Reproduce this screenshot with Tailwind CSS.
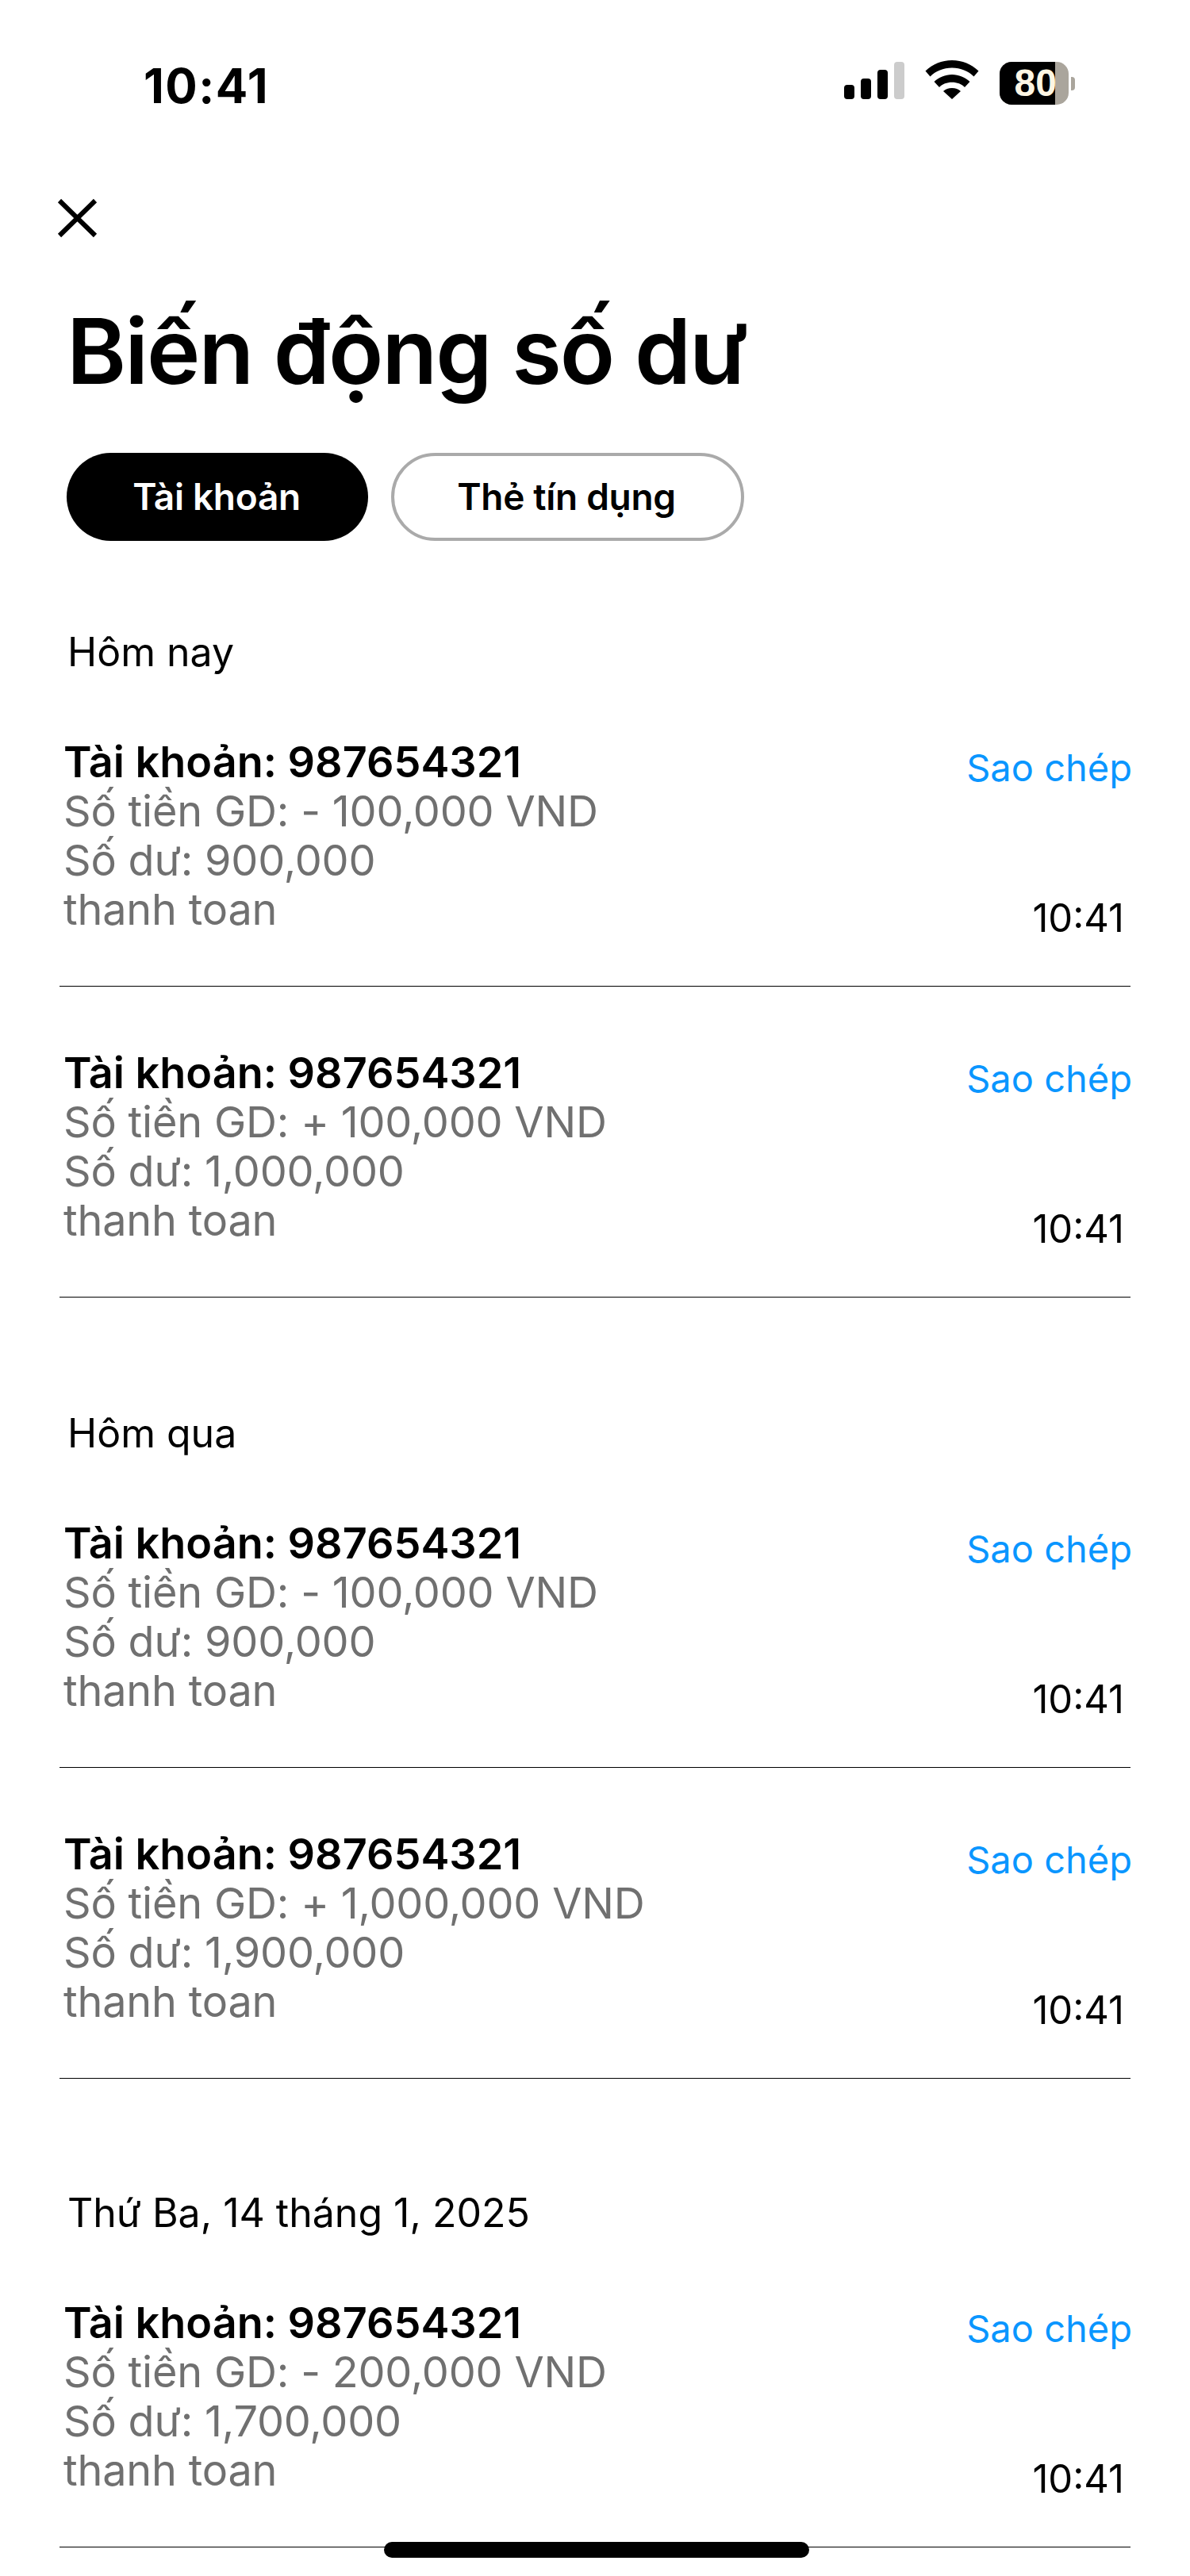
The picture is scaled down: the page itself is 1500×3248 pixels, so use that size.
<!DOCTYPE html>
<html lang="vi">
<head>
<meta charset="utf-8">
<script src="https://cdn.jsdelivr.net/npm/@tailwindcss/browser@4"></script>
<title>Biến động số dư</title>
</head>
<body class="bg-white">
<div class="relative w-[1500px] h-[3248px] overflow-hidden bg-white text-black font-['Inter','Noto_Sans',sans-serif]">
  <!-- status bar -->
  <div class="flex h-[218px] items-start">
    <div class="ml-[181px] mt-[72px] text-[60px] leading-[72px] font-bold tracking-[1.5px]">10:41</div>
    <div class="ml-auto mr-[145px] mt-[76px] flex items-start">
      <div class="flex items-end gap-2 h-[48px] mt-px">
        <div class="w-[13px] h-[18px] rounded-[4px] bg-black"></div>
        <div class="w-[13px] h-[26px] rounded-[4px] bg-black"></div>
        <div class="w-[13px] h-[37px] rounded-[4px] bg-black"></div>
        <div class="w-[13px] h-[47px] rounded-[4px] bg-[#cccccc]"></div>
      </div>
      <svg class="ml-[26px]" width="68" height="50" viewBox="0 0 68 50"><path d="M34 0C21 0 9.500 5 0.500 13.500L6.500 20.500C13.500 13.500 23 9.500 34 9.500C45 9.500 54.500 13.500 61.500 20.500L67.500 13.500C58.500 5 47 0 34 0Z M34 18C25.500 18 17.500 21.500 11.500 27L18 34C22 30 27.500 27.800 34 27.800C40.500 27.800 46 30 50 34L56.500 27C50.500 21.500 42.500 18 34 18Z M34 35C29.500 35 26 36.500 23 39L34 49L45 39C42 36.500 38.500 35 34 35Z" fill="#000"/></svg>
      <div class="relative ml-[26px] mt-[2px] flex items-center w-[95px] h-[54px]">
        <div class="w-[87px] h-[54px] rounded-[15px] overflow-hidden bg-[#aaa59c]">
          <div class="flex w-[70px] h-[54px] items-center justify-end bg-black text-[#fdf6e3] text-[48px] font-bold font-['Liberation_Sans',sans-serif] leading-[54px]"><span class="mr-[-2px]">80</span></div>
        </div>
        <div class="ml-[3px] w-[5px] h-[17px] rounded-r-[4px] bg-[#aaa59c]"></div>
      </div>
    </div>
  </div>
  <!-- close -->
  <svg class="mt-[31px] ml-[71px] block" width="52" height="52" viewBox="0 0 52 52" fill="none" stroke="#000" stroke-width="6"><path d="M4 4L49 48M49 4L4 48"/></svg>
  <!-- title -->
  <h1 class="mt-[77px] ml-[84px] text-[114px] leading-[130px] font-semibold tracking-[-2px]">Biến động số dư</h1>
  <!-- tabs -->
  <div class="mt-[63px] ml-[84px] flex gap-[29px]">
    <div class="flex h-[111px] w-[380px] items-center justify-center rounded-full bg-black text-white text-[46px] font-semibold tracking-[-0.3px] pr-[2px]">Tài khoản</div>
    <div class="flex h-[111px] w-[445px] items-center justify-center rounded-full border-[4px] border-[#aaaaaa] text-[46px] font-semibold tracking-[-0.3px] pr-[3px]">Thẻ tín dụng</div>
  </div>

  <div class="mt-[109px]">
    <section>
      <h2 class="ml-[85px] text-[50px] leading-[62px] font-normal">Hôm nay</h2>
      <div class="mt-[77px] flex flex-col gap-[78px]">
        <article class="ml-[75px] w-[1350px] border-b border-black pb-[65px]">
          <div class="flex justify-between">
            <div class="ml-[5px] text-[54px] leading-[62px] text-[#707070] tracking-[-0.2px]">
              <p class="font-semibold text-black tracking-normal">Tài khoản: 987654321</p>
              <p>Số tiền GD: - 100,000 VND</p>
              <p>Số dư: 900,000</p>
              <p>thanh toan</p>
            </div>
            <div class="flex flex-col items-end justify-between mr-[-2px]">
              <span class="mt-[8px] text-[47px] leading-[60px] text-[#0a96ff]">Sao chép</span>
              <span class="mr-[10px] mb-[-10px] text-[49px] leading-[60px] font-normal">10:41</span>
            </div>
          </div>
        </article>
        <article class="ml-[75px] w-[1350px] border-b border-black pb-[65px]">
          <div class="flex justify-between">
            <div class="ml-[5px] text-[54px] leading-[62px] text-[#707070] tracking-[-0.2px]">
              <p class="font-semibold text-black tracking-normal">Tài khoản: 987654321</p>
              <p>Số tiền GD: + 100,000 VND</p>
              <p>Số dư: 1,000,000</p>
              <p>thanh toan</p>
            </div>
            <div class="flex flex-col items-end justify-between mr-[-2px]">
              <span class="mt-[8px] text-[47px] leading-[60px] text-[#0a96ff]">Sao chép</span>
              <span class="mr-[10px] mb-[-10px] text-[49px] leading-[60px] font-normal">10:41</span>
            </div>
          </div>
        </article>
      </div>
    </section>

    <section class="mt-[140px]">
      <h2 class="ml-[85px] text-[50px] leading-[62px] font-normal">Hôm qua</h2>
      <div class="mt-[77px] flex flex-col gap-[78px]">
        <article class="ml-[75px] w-[1350px] border-b border-black pb-[65px]">
          <div class="flex justify-between">
            <div class="ml-[5px] text-[54px] leading-[62px] text-[#707070] tracking-[-0.2px]">
              <p class="font-semibold text-black tracking-normal">Tài khoản: 987654321</p>
              <p>Số tiền GD: - 100,000 VND</p>
              <p>Số dư: 900,000</p>
              <p>thanh toan</p>
            </div>
            <div class="flex flex-col items-end justify-between mr-[-2px]">
              <span class="mt-[8px] text-[47px] leading-[60px] text-[#0a96ff]">Sao chép</span>
              <span class="mr-[10px] mb-[-10px] text-[49px] leading-[60px] font-normal">10:41</span>
            </div>
          </div>
        </article>
        <article class="ml-[75px] w-[1350px] border-b border-black pb-[65px]">
          <div class="flex justify-between">
            <div class="ml-[5px] text-[54px] leading-[62px] text-[#707070] tracking-[-0.2px]">
              <p class="font-semibold text-black tracking-normal">Tài khoản: 987654321</p>
              <p>Số tiền GD: + 1,000,000 VND</p>
              <p>Số dư: 1,900,000</p>
              <p>thanh toan</p>
            </div>
            <div class="flex flex-col items-end justify-between mr-[-2px]">
              <span class="mt-[8px] text-[47px] leading-[60px] text-[#0a96ff]">Sao chép</span>
              <span class="mr-[10px] mb-[-10px] text-[49px] leading-[60px] font-normal">10:41</span>
            </div>
          </div>
        </article>
      </div>
    </section>

    <section class="mt-[138px]">
      <h2 class="ml-[85px] text-[50px] leading-[62px] font-normal">Thứ Ba, 14 tháng 1, 2025</h2>
      <div class="mt-[77px] flex flex-col gap-[78px]">
        <article class="ml-[75px] w-[1350px] border-b border-black pb-[65px]">
          <div class="flex justify-between">
            <div class="ml-[5px] text-[54px] leading-[62px] text-[#707070] tracking-[-0.2px]">
              <p class="font-semibold text-black tracking-normal">Tài khoản: 987654321</p>
              <p>Số tiền GD: - 200,000 VND</p>
              <p>Số dư: 1,700,000</p>
              <p>thanh toan</p>
            </div>
            <div class="flex flex-col items-end justify-between mr-[-2px]">
              <span class="mt-[8px] text-[47px] leading-[60px] text-[#0a96ff]">Sao chép</span>
              <span class="mr-[10px] mb-[-10px] text-[49px] leading-[60px] font-normal">10:41</span>
            </div>
          </div>
        </article>
      </div>
    </section>
  </div>

  <!-- home indicator -->
  <div class="absolute left-[484px] top-[3205px] w-[536px] h-[20px] rounded-full bg-black"></div>
</div>
</body>
</html>
